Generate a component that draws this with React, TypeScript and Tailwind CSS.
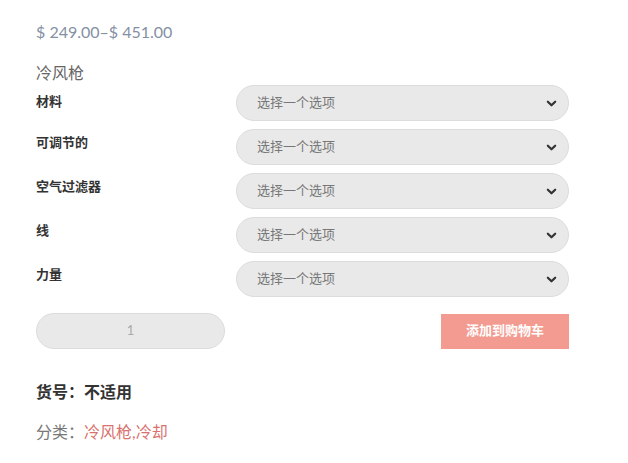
import React from 'react'

const attrs = ['材料', '可调节的', '空气过滤器', '线', '力量']

function Chevron() {
      return (
            <svg viewBox="0 0 12 12" className="w-[11px] h-[11px] text-[#333]" fill="none">
                  <path d="M2 4l4 4 4-4" stroke="currentColor" strokeWidth="2.4" strokeLinecap="round" strokeLinejoin="round" />
            </svg>
      )
}

export default function App() {
      return (
            <div className="w-[628px] h-[463px] bg-white px-9 pt-[20px] font-['Lato','Noto_Sans_CJK_SC',sans-serif]">
                  {/* Harga */}
                  <p className="text-[16px] leading-6 text-[#8490a3]">$ 249.00–$ 451.00</p>
                  <p className="mt-[17px] text-[16px] leading-6 text-[#666]">冷风枪</p>
                  {/* Variasi */}
                  <div className="w-[533px] flex flex-col gap-2">
                        {attrs.map((a, i) => (
                              <div key={a} className="flex items-start">
                                    <div className={i === 0 ? 'w-[200px] pt-[6px] text-[13px] font-bold text-[#333] leading-5' : 'w-[200px] pt-[3px] text-[13px] font-bold text-[#333] leading-5'}>{a}</div>
                                    <div className="flex-1 h-[36px] rounded-full bg-[#e9e9e9] border border-[#dcdcdc] flex items-center justify-between pl-5 pr-[11px]">
                                          <span className="text-[13px] text-[#777]">选择一个选项</span>
                                          <Chevron />
                                    </div>
                              </div>
                        ))}
                  </div>
                  {/* Keranjang */}
                  <div className="mt-4 w-[533px] flex items-center justify-between">
                        <div className="w-[189px] h-[36px] rounded-full bg-[#e9e9e9] border border-[#dcdcdc] flex items-center justify-center text-[13px] text-[#aaa]">1</div>
                        <div className="w-[128px] h-[35px] bg-[#f39b90] flex items-center justify-center text-[13px] font-bold text-white">添加到购物车</div>
                  </div>
                  <p className="mt-[31px] text-[16px] font-bold text-[#333] leading-6">货号：不适用</p>
                  <p className="mt-[16px] text-[16px] text-[#777] leading-6">分类：<span className="text-[#d9726e]">冷风枪,冷却</span></p>
            </div>
      )
}
